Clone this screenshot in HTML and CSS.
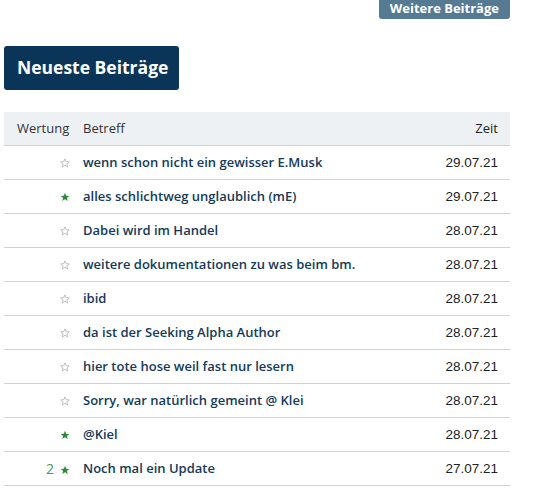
FILE: index.html
```html
<!DOCTYPE html>
<html lang="de">
<head>
<meta charset="utf-8">
<link rel="stylesheet" href="styles.css">
</head>
<body>
<div class="page">
  <div class="top">
    <a class="more-btn">Weitere Beiträge</a>
  </div>
  <h2 class="title">Neueste Beiträge</h2>
  <table class="posts">
    <thead>
      <tr><th class="c-rate">Wertung</th><th class="c-subj">Betreff</th><th class="c-time">Zeit</th></tr>
    </thead>
    <tbody>
      <tr><td class="c-rate"><svg class="star empty" viewBox="0 0 10 10"><path d="M5 .8 6.2 3.7 9.3 3.9 6.9 5.9 7.7 9 5 7.3 2.3 9 3.1 5.9.7 3.9 3.8 3.7Z"/></svg></td><td class="c-subj">wenn schon nicht ein gewisser E.Musk</td><td class="c-time">29.07.21</td></tr>
      <tr><td class="c-rate"><svg class="star full" viewBox="0 0 10 10"><path d="M5 .8 6.2 3.7 9.3 3.9 6.9 5.9 7.7 9 5 7.3 2.3 9 3.1 5.9.7 3.9 3.8 3.7Z"/></svg></td><td class="c-subj">alles schlichtweg unglaublich (mE)</td><td class="c-time">29.07.21</td></tr>
      <tr><td class="c-rate"><svg class="star empty" viewBox="0 0 10 10"><path d="M5 .8 6.2 3.7 9.3 3.9 6.9 5.9 7.7 9 5 7.3 2.3 9 3.1 5.9.7 3.9 3.8 3.7Z"/></svg></td><td class="c-subj">Dabei wird im Handel</td><td class="c-time">28.07.21</td></tr>
      <tr><td class="c-rate"><svg class="star empty" viewBox="0 0 10 10"><path d="M5 .8 6.2 3.7 9.3 3.9 6.9 5.9 7.7 9 5 7.3 2.3 9 3.1 5.9.7 3.9 3.8 3.7Z"/></svg></td><td class="c-subj">weitere dokumentationen zu was beim bm.</td><td class="c-time">28.07.21</td></tr>
      <tr><td class="c-rate"><svg class="star empty" viewBox="0 0 10 10"><path d="M5 .8 6.2 3.7 9.3 3.9 6.9 5.9 7.7 9 5 7.3 2.3 9 3.1 5.9.7 3.9 3.8 3.7Z"/></svg></td><td class="c-subj">ibid</td><td class="c-time">28.07.21</td></tr>
      <tr><td class="c-rate"><svg class="star empty" viewBox="0 0 10 10"><path d="M5 .8 6.2 3.7 9.3 3.9 6.9 5.9 7.7 9 5 7.3 2.3 9 3.1 5.9.7 3.9 3.8 3.7Z"/></svg></td><td class="c-subj">da ist der Seeking Alpha Author</td><td class="c-time">28.07.21</td></tr>
      <tr><td class="c-rate"><svg class="star empty" viewBox="0 0 10 10"><path d="M5 .8 6.2 3.7 9.3 3.9 6.9 5.9 7.7 9 5 7.3 2.3 9 3.1 5.9.7 3.9 3.8 3.7Z"/></svg></td><td class="c-subj">hier tote hose weil fast nur lesern</td><td class="c-time">28.07.21</td></tr>
      <tr><td class="c-rate"><svg class="star empty" viewBox="0 0 10 10"><path d="M5 .8 6.2 3.7 9.3 3.9 6.9 5.9 7.7 9 5 7.3 2.3 9 3.1 5.9.7 3.9 3.8 3.7Z"/></svg></td><td class="c-subj">Sorry, war natürlich gemeint @ Klei</td><td class="c-time">28.07.21</td></tr>
      <tr><td class="c-rate"><svg class="star full" viewBox="0 0 10 10"><path d="M5 .8 6.2 3.7 9.3 3.9 6.9 5.9 7.7 9 5 7.3 2.3 9 3.1 5.9.7 3.9 3.8 3.7Z"/></svg></td><td class="c-subj">@Kiel</td><td class="c-time">28.07.21</td></tr>
      <tr><td class="c-rate"><span class="count">2</span><svg class="star full" viewBox="0 0 10 10"><path d="M5 .8 6.2 3.7 9.3 3.9 6.9 5.9 7.7 9 5 7.3 2.3 9 3.1 5.9.7 3.9 3.8 3.7Z"/></svg></td><td class="c-subj">Noch mal ein Update</td><td class="c-time">27.07.21</td></tr>
    </tbody>
  </table>
</div>
</body>
</html>
```
FILE: styles.css
```css
html, body { margin: 0; padding: 0; background: #fff; }
body { font-family: "Open Sans", "Liberation Sans", sans-serif; color: #222; }
.page { width: 506px; padding: 0 0 0 4px; margin-top: -4px; }
.top { display: flex; justify-content: flex-end; }
.more-btn {
  display: block;
  background: #557a92;
  color: #fff;
  font-weight: bold;
  font-size: 13px;
  line-height: 18px;
  padding: 3px 11px 2px;
  border-radius: 0 0 3px 3px;
}
.title {
  display: inline-block;
  margin: 27px 0 0;
  background: #0b3558;
  color: #fff;
  font-size: 17.5px;
  font-weight: bold;
  line-height: 24px;
  padding: 9px 11px 11px 13px;
  border-radius: 3px;
}
.posts {
  width: 506px;
  margin-top: 22px;
  border-collapse: collapse;
  font-size: 13px;
  table-layout: fixed;
}
.posts th {
  background: #eef1f4;
  font-weight: normal;
  color: #333;
  height: 32px;
  padding: 0 6px 1px;
  text-align: left;
  border-bottom: 1px solid #cdd3d9;
}
.posts td {
  height: 32px;
  padding: 0 6px 1px;
  border-bottom: 1px solid #cdd3d9;
}
.posts .c-rate { width: 61px; text-align: right; padding: 0 8px 1px 5px; }
.posts th.c-rate { text-align: left; padding-left: 13px; padding-right: 0; width: 61px; }
.posts .c-subj { color: #143a5a; font-weight: 600; padding-left: 5px; }
.posts th.c-subj { color: #333; font-weight: normal; }
.posts .c-time { width: 110px; text-align: right; padding-right: 12px; color: #222; font-family: "Liberation Sans", sans-serif; font-size: 13.5px; }
.posts th.c-time { font-family: "Open Sans", sans-serif; font-size: 13px; }
.star { width: 10px; height: 10px; vertical-align: -1px; }
.star.empty { fill: none; stroke: #b8b8b8; stroke-width: 0.9; }
.star.full { fill: #2f8a3e; }
.count { color: #4c9a4c; margin-right: 6px; font-size: 14px; }
```
